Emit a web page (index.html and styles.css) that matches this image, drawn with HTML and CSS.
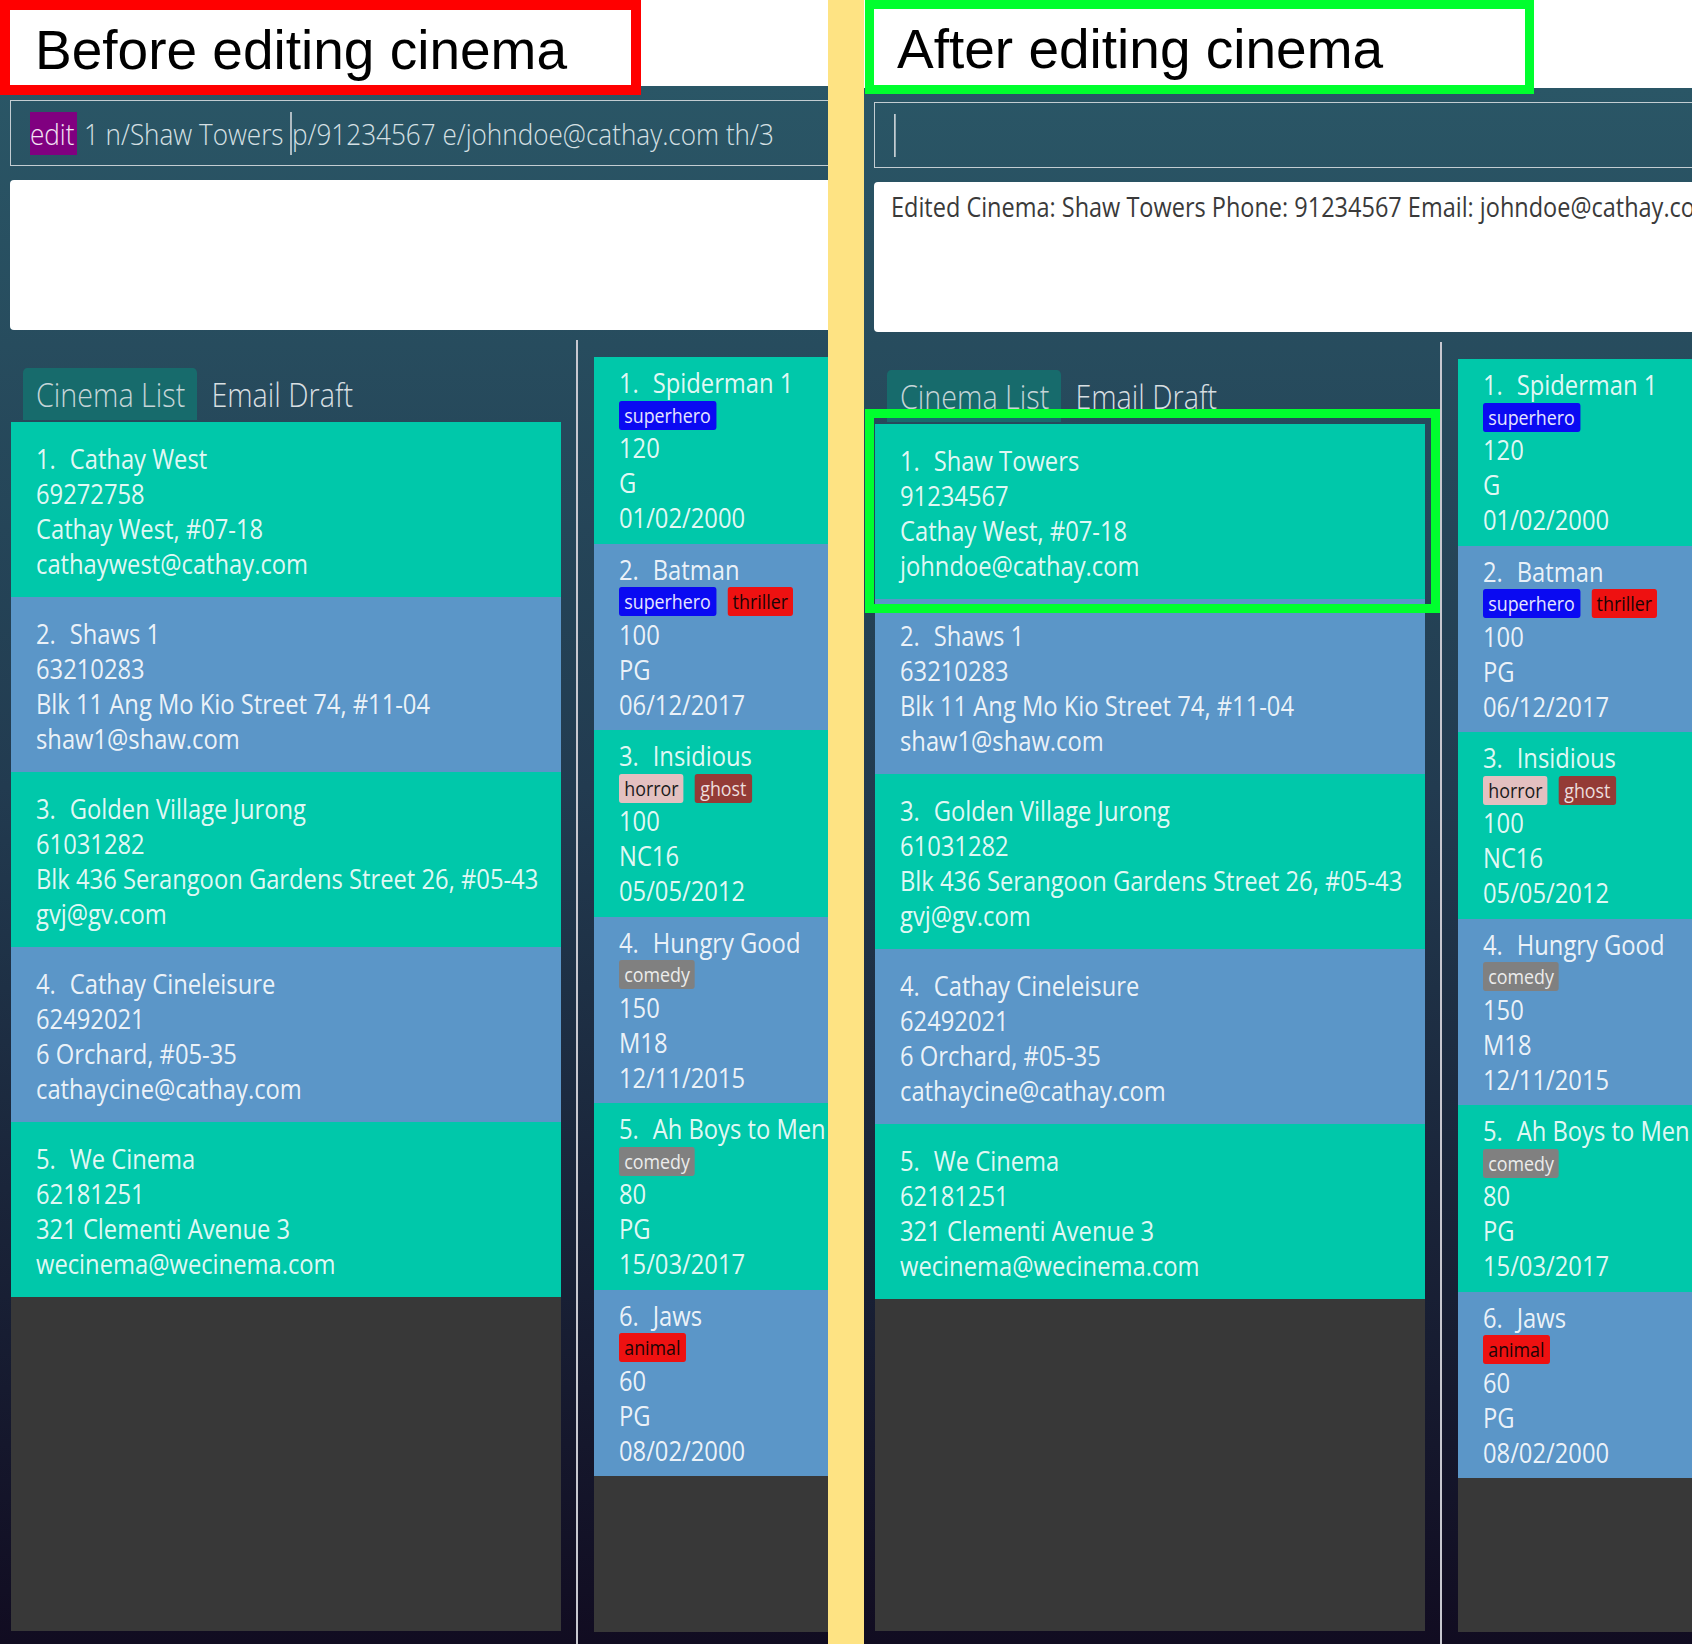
FILE: index.html
```html
<!DOCTYPE html>
<html lang="en">
<head>
<meta charset="utf-8">
<title>Before / After editing cinema</title>
<link rel="stylesheet" href="styles.css">
</head>
<body>
<div class="stage">
  <section class="pane pane--before">
    <div class="pane-top"></div>
    <div class="app">
      <div class="command"><span class="cmd-line"><span class="kw">edit</span> 1 n/Shaw Towers <span class="caret"></span>p/91234567 e/johndoe@cathay.com th/3</span></div>
      <div class="result"></div>
      <div class="lower">
        <div class="cinema-col">
          <div class="tabs">
            <div class="tab-strip">
              <div class="tab active">Cinema List</div>
              <div class="tab">Email Draft</div>
            </div>
          </div>
          <div class="list">
            <div class="card teal"><div class="body">
              <div><span class="idx">1.</span>Cathay West</div>
              <div>69272758</div>
              <div>Cathay West, #07-18</div>
              <div>cathaywest@cathay.com</div>
            </div></div>
            <div class="card blue"><div class="body">
              <div><span class="idx">2.</span>Shaws 1</div>
              <div>63210283</div>
              <div>Blk 11 Ang Mo Kio Street 74, #11-04</div>
              <div>shaw1@shaw.com</div>
            </div></div>
            <div class="card teal"><div class="body">
              <div><span class="idx">3.</span>Golden Village Jurong</div>
              <div>61031282</div>
              <div>Blk 436 Serangoon Gardens Street 26, #05-43</div>
              <div>gvj@gv.com</div>
            </div></div>
            <div class="card blue"><div class="body">
              <div><span class="idx">4.</span>Cathay Cineleisure</div>
              <div>62492021</div>
              <div>6 Orchard, #05-35</div>
              <div>cathaycine@cathay.com</div>
            </div></div>
            <div class="card teal"><div class="body">
              <div><span class="idx">5.</span>We Cinema</div>
              <div>62181251</div>
              <div>321 Clementi Avenue 3</div>
              <div>wecinema@wecinema.com</div>
            </div></div>
          </div>
        </div>
        <div class="sep"></div>
        <div class="movie-col">
          <div class="list">
            <div class="card movie teal"><div class="body">
              <div><span class="idx">1.</span>Spiderman 1</div>
              <div class="tags"><span class="tag t-blue">superhero</span></div>
              <div>120</div><div>G</div><div>01/02/2000</div>
            </div></div>
            <div class="card movie blue"><div class="body">
              <div><span class="idx">2.</span>Batman</div>
              <div class="tags"><span class="tag t-blue">superhero</span><span class="tag t-red">thriller</span></div>
              <div>100</div><div>PG</div><div>06/12/2017</div>
            </div></div>
            <div class="card movie teal"><div class="body">
              <div><span class="idx">3.</span>Insidious</div>
              <div class="tags"><span class="tag t-pink">horror</span><span class="tag t-brown">ghost</span></div>
              <div>100</div><div>NC16</div><div>05/05/2012</div>
            </div></div>
            <div class="card movie blue"><div class="body">
              <div><span class="idx">4.</span>Hungry Good</div>
              <div class="tags"><span class="tag t-grey">comedy</span></div>
              <div>150</div><div>M18</div><div>12/11/2015</div>
            </div></div>
            <div class="card movie teal"><div class="body">
              <div><span class="idx">5.</span>Ah Boys to Men</div>
              <div class="tags"><span class="tag t-grey">comedy</span></div>
              <div>80</div><div>PG</div><div>15/03/2017</div>
            </div></div>
            <div class="card movie blue"><div class="body">
              <div><span class="idx">6.</span>Jaws</div>
              <div class="tags"><span class="tag t-red">animal</span></div>
              <div>60</div><div>PG</div><div>08/02/2000</div>
            </div></div>
          </div>
        </div>
      </div>
    </div>
    <div class="label label--red">Before editing cinema</div>
  </section>

  <div class="divider"></div>

  <section class="pane pane--after">
    <div class="pane-top"></div>
    <div class="app">
      <div class="command"><span class="cmd-line"><span class="caret"></span></span></div>
      <div class="result"><span class="result-text">Edited Cinema: Shaw Towers Phone: 91234567 Email: johndoe@cathay.com</span></div>
      <div class="lower">
        <div class="cinema-col">
          <div class="tabs">
            <div class="tab-strip">
              <div class="tab active">Cinema List</div>
              <div class="tab">Email Draft</div>
            </div>
          </div>
          <div class="list">
            <div class="card teal"><div class="body">
              <div><span class="idx">1.</span>Shaw Towers</div>
              <div>91234567</div>
              <div>Cathay West, #07-18</div>
              <div>johndoe@cathay.com</div>
            </div></div>
            <div class="card blue"><div class="body">
              <div><span class="idx">2.</span>Shaws 1</div>
              <div>63210283</div>
              <div>Blk 11 Ang Mo Kio Street 74, #11-04</div>
              <div>shaw1@shaw.com</div>
            </div></div>
            <div class="card teal"><div class="body">
              <div><span class="idx">3.</span>Golden Village Jurong</div>
              <div>61031282</div>
              <div>Blk 436 Serangoon Gardens Street 26, #05-43</div>
              <div>gvj@gv.com</div>
            </div></div>
            <div class="card blue"><div class="body">
              <div><span class="idx">4.</span>Cathay Cineleisure</div>
              <div>62492021</div>
              <div>6 Orchard, #05-35</div>
              <div>cathaycine@cathay.com</div>
            </div></div>
            <div class="card teal"><div class="body">
              <div><span class="idx">5.</span>We Cinema</div>
              <div>62181251</div>
              <div>321 Clementi Avenue 3</div>
              <div>wecinema@wecinema.com</div>
            </div></div>
          </div>
        </div>
        <div class="sep"></div>
        <div class="movie-col">
          <div class="list">
            <div class="card movie teal"><div class="body">
              <div><span class="idx">1.</span>Spiderman 1</div>
              <div class="tags"><span class="tag t-blue">superhero</span></div>
              <div>120</div><div>G</div><div>01/02/2000</div>
            </div></div>
            <div class="card movie blue"><div class="body">
              <div><span class="idx">2.</span>Batman</div>
              <div class="tags"><span class="tag t-blue">superhero</span><span class="tag t-red">thriller</span></div>
              <div>100</div><div>PG</div><div>06/12/2017</div>
            </div></div>
            <div class="card movie teal"><div class="body">
              <div><span class="idx">3.</span>Insidious</div>
              <div class="tags"><span class="tag t-pink">horror</span><span class="tag t-brown">ghost</span></div>
              <div>100</div><div>NC16</div><div>05/05/2012</div>
            </div></div>
            <div class="card movie blue"><div class="body">
              <div><span class="idx">4.</span>Hungry Good</div>
              <div class="tags"><span class="tag t-grey">comedy</span></div>
              <div>150</div><div>M18</div><div>12/11/2015</div>
            </div></div>
            <div class="card movie teal"><div class="body">
              <div><span class="idx">5.</span>Ah Boys to Men</div>
              <div class="tags"><span class="tag t-grey">comedy</span></div>
              <div>80</div><div>PG</div><div>15/03/2017</div>
            </div></div>
            <div class="card movie blue"><div class="body">
              <div><span class="idx">6.</span>Jaws</div>
              <div class="tags"><span class="tag t-red">animal</span></div>
              <div>60</div><div>PG</div><div>08/02/2000</div>
            </div></div>
          </div>
        </div>
      </div>
    </div>
    <div class="highlight"></div>
    <div class="label label--green">After editing cinema</div>
  </section>
</div>
</body>
</html>
```

FILE: styles.css
```css
* { box-sizing: border-box; }
html, body { margin: 0; padding: 0; }
body {
  width: 1692px;
  height: 1644px;
  overflow: hidden;
  background: #ffffff;
  font-family: "Open Sans", "Noto Sans", sans-serif;
}
.stage { display: flex; height: 1644px; }

.pane {
  position: relative;
  width: 828px;
  height: 1644px;
  flex: none;
  overflow: hidden;
  display: flex;
  flex-direction: column;
  background: #ffffff;
}
.divider { width: 36px; flex: none; background: #fee383; }
.pane-top { height: 86px; flex: none; background: #ffffff; }
.pane--after .pane-top { height: 88px; }

.app {
  flex: 1;
  width: 1300px;
  min-height: 0;
  display: flex;
  flex-direction: column;
  padding: 14px 0 0 10px;
  background: linear-gradient(180deg, #2a5666 0%, #223b50 45%, #110c21 100%);
}

/* The app's Segoe-like type is narrow: squeeze Open Sans horizontally */
.cmd-line,
.result-text,
.tab-strip,
.body {
  transform: scaleX(0.87);
  transform-origin: 0 50%;
}

.command {
  flex: none;
  height: 66px;
  border: 1px solid #c3cdd2;
  display: flex;
  align-items: center;
  padding-left: 19px;
  color: #d6e0e4;
  font-size: 30px;
  font-weight: 300;
  white-space: nowrap;
}
.cmd-line { display: block; line-height: 43px; }
.kw {
  display: inline-block;
  background: #800080;
  color: #f4e4f4;
  line-height: 43px;
  padding-right: 3px;
}
.caret {
  display: inline-block;
  width: 0;
  height: 43px;
  border-left: 2px solid #c3ccd1;
  vertical-align: top;
}

.result {
  flex: none;
  margin-top: 14px;
  height: 150px;
  background: #ffffff;
  border-radius: 4px;
  padding: 8px 17px;
  font-size: 27px;
  line-height: 34px;
  color: #3a3a3a;
  white-space: nowrap;
}
.result-text { display: block; }

.lower { flex: 1; min-height: 0; display: flex; margin-top: 10px; }

.cinema-col {
  width: 550px;
  flex: none;
  margin-left: 1px;
  padding: 28px 0 13px;
  display: flex;
  flex-direction: column;
}
.tabs { height: 52px; flex: none; padding-left: 12px; margin-bottom: 2px; }
.tab-strip { display: flex; height: 52px; }
.tab {
  display: flex;
  align-items: center;
  padding: 0 13px 0 15px;
  font-size: 33px;
  font-weight: 300;
  color: #d8dfe2;
  border-radius: 5px 5px 0 0;
}
.tab.active { background: #176b6c; color: #c5d5d8; }
.tab + .tab { padding-left: 17px; }

.list { flex: 1; min-height: 0; background: #383838; overflow: hidden; }

.sep { width: 2px; flex: none; margin: 0 16px 0 15px; background: #c8c8d0; }

.movie-col {
  width: 500px;
  flex: none;
  padding: 17px 0 12px;
  display: flex;
  flex-direction: column;
}

.card {
  padding: 18.5px 25px 16.5px;
  font-size: 27.3px;
  line-height: 35px;
  color: rgba(255, 255, 255, 0.9);
  white-space: nowrap;
}
.teal { background: #00c8aa; }
.blue { background: #5b96c8; }
.idx { margin-right: 16px; }

.movie { padding: 8px 25px 8.5px; font-size: 27.3px; }
.tags { display: flex; align-items: center; gap: 13px; height: 30px; }
.tag {
  height: 29px;
  line-height: 29px;
  padding: 0 6px;
  border-radius: 3px;
  font-size: 20.5px;
}
.t-blue { background: #0a0af2; color: #e6e6ff; }
.t-red { background: #ee1111; color: #1a0505; }
.t-pink { background: #e3c0c0; color: #1a1a1a; }
.t-brown { background: #943b36; color: #ecdede; }
.t-grey { background: #808080; color: #ececec; }

.highlight {
  position: absolute;
  left: 1px;
  top: 409px;
  width: 575px;
  height: 204px;
  border: 9px solid #00ff2e;
}

.label {
  position: absolute;
  top: 0;
  background: #ffffff;
  font-family: "Liberation Sans", Arial, sans-serif;
  font-size: 55px;
  color: #000000;
  white-space: nowrap;
}
.label--red {
  left: 0;
  width: 641px;
  height: 95px;
  border: 10px solid #ff0000;
  padding: 5px 0 0 25px;
  line-height: 70px;
}
.label--green {
  left: 1px;
  width: 669px;
  height: 94px;
  border: 9px solid #00ff2e;
  padding: 5px 0 0 23px;
  line-height: 71px;
}
```
